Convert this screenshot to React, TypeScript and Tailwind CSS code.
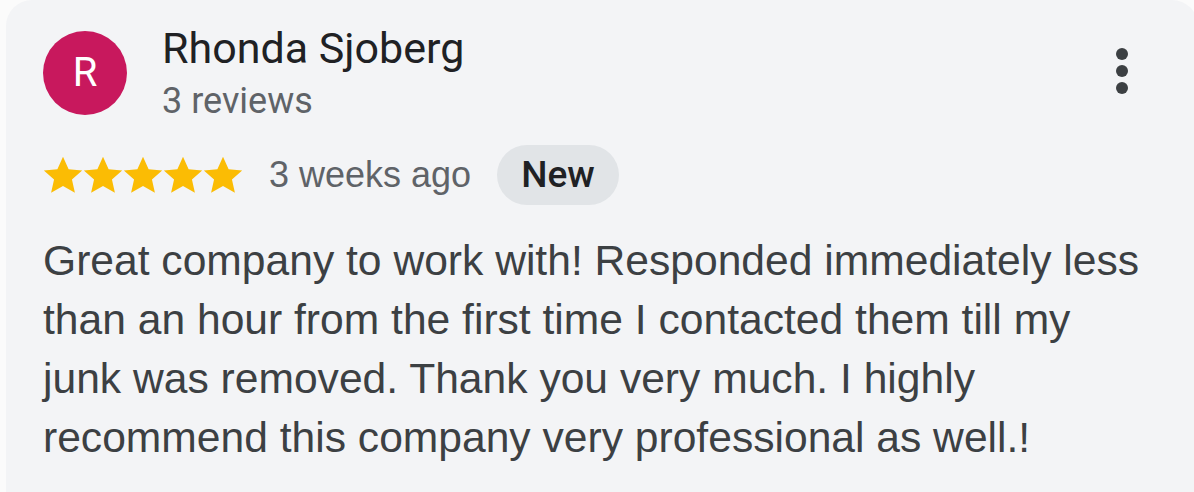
import React from "react";

const Star = () => (
  <svg width="40" height="38" viewBox="1.5 1.8 21 20" className="block" preserveAspectRatio="none">
    <path
      d="M12 2.2l2.95 6.55 7.1.7-5.35 4.75 1.55 7-6.25-3.65-6.25 3.65 1.55-7L1.95 9.45l7.1-.7z"
      fill="#fbbc04"
    />
  </svg>
);

export default function App() {
  return (
    <div className="w-[1194px] h-[492px] bg-[#fbfbfb] overflow-hidden">
      <div className="ml-[6px] w-[1192px] h-[520px] bg-[#f3f4f6] rounded-t-[26px] pl-[37px] pt-[31px] relative">
        <div className="flex items-start">
          <div className="w-[84px] h-[84px] rounded-full bg-[#c8185d] flex items-center justify-center text-white text-[40px] font-['Roboto',sans-serif]">
            R
          </div>
          <div className="ml-[35px] flex flex-col">
            <div className="text-[43px] leading-[46px] mt-[-6px] text-[#202124] font-['Roboto',sans-serif]">
              Rhonda Sjoberg
            </div>
            <div className="text-[36px] leading-[40px] mt-[10px] text-[#5f6368] font-['Roboto',sans-serif]">
              3 reviews
            </div>
          </div>
        </div>
        <div className="absolute right-[70px] top-[48px] flex flex-col gap-[5px]">
          <span className="w-[12px] h-[12px] rounded-full bg-[#3c4043]" />
          <span className="w-[12px] h-[12px] rounded-full bg-[#3c4043]" />
          <span className="w-[12px] h-[12px] rounded-full bg-[#3c4043]" />
        </div>
        <div className="flex items-center mt-[24px]">
          <div className="flex">
            <Star />
            <Star />
            <Star />
            <Star />
            <Star />
          </div>
          <div className="ml-[26px] text-[36px] text-[#5f6368] font-['Liberation_Sans',Arial,sans-serif]">
            3 weeks ago
          </div>
          <div className="ml-[26px] h-[60px] px-[24px] rounded-full bg-[#e1e4e7] flex items-center text-[37px] font-medium text-[#202124] font-['Roboto',sans-serif]">
            New
          </div>
        </div>
        <p className="mt-[26px] whitespace-nowrap text-[42.6px] leading-[59px] text-[#3c4043] font-['Liberation_Sans',Arial,sans-serif]">
          Great company to work with! Responded immediately less
          <br />
          than an hour from the first time I contacted them till my
          <br />
          junk was removed. Thank you very much. I highly
          <br />
          recommend this company very professional as well.!
        </p>
      </div>
    </div>
  );
}
